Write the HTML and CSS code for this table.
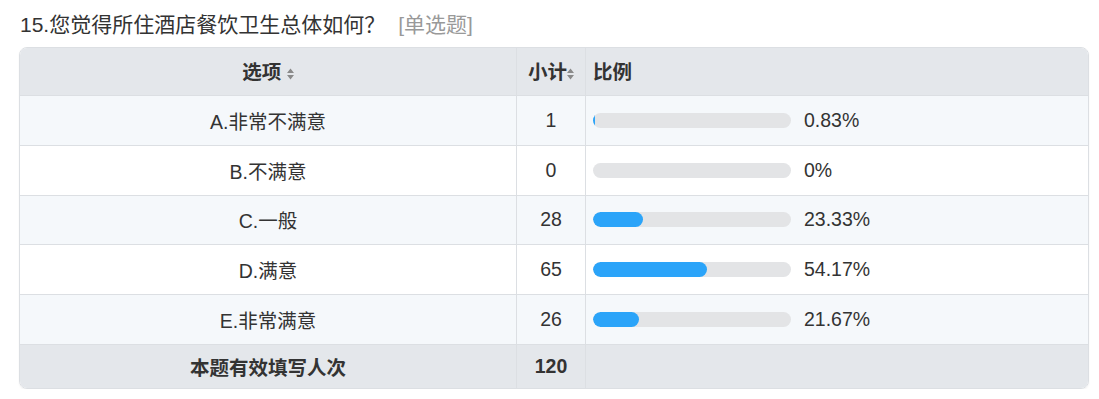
FILE: index.html
```html
<!DOCTYPE html>
<html lang="zh-CN">
<head>
<meta charset="utf-8">
<title>统计</title>
<link rel="stylesheet" href="styles.css">
</head>
<body>
<div class="page">
  <div class="title">15.您觉得所住酒店餐饮卫生总体如何？<span class="qtype">[单选题]</span></div>
  <table class="stats">
    <thead>
      <tr>
        <th class="c-opt">选项 <svg class="sort" width="7" height="12" viewBox="0 0 7 12"><path d="M0 5 L3.5 0.5 L7 5 Z M0 7 L7 7 L3.5 11.5 Z"/></svg></th>
        <th class="c-cnt">小计<svg class="sort" width="7" height="12" viewBox="0 0 7 12"><path d="M0 5 L3.5 0.5 L7 5 Z M0 7 L7 7 L3.5 11.5 Z"/></svg></th>
        <th class="c-pct">比例</th>
      </tr>
    </thead>
    <tbody>
      <tr class="alt">
        <td class="c-opt">A.非常不满意</td>
        <td class="c-cnt">1</td>
        <td class="c-pct"><div class="bar-wrap"><div class="track"><div class="fill" style="width:2px"></div></div><span class="pct">0.83%</span></div></td>
      </tr>
      <tr>
        <td class="c-opt">B.不满意</td>
        <td class="c-cnt">0</td>
        <td class="c-pct"><div class="bar-wrap"><div class="track"></div><span class="pct">0%</span></div></td>
      </tr>
      <tr class="alt">
        <td class="c-opt">C.一般</td>
        <td class="c-cnt">28</td>
        <td class="c-pct"><div class="bar-wrap"><div class="track"><div class="fill" style="width:50px"></div></div><span class="pct">23.33%</span></div></td>
      </tr>
      <tr>
        <td class="c-opt">D.满意</td>
        <td class="c-cnt">65</td>
        <td class="c-pct"><div class="bar-wrap"><div class="track"><div class="fill" style="width:114px"></div></div><span class="pct">54.17%</span></div></td>
      </tr>
      <tr class="alt">
        <td class="c-opt">E.非常满意</td>
        <td class="c-cnt">26</td>
        <td class="c-pct"><div class="bar-wrap"><div class="track"><div class="fill" style="width:46px"></div></div><span class="pct">21.67%</span></div></td>
      </tr>
    </tbody>
    <tfoot>
      <tr>
        <td class="c-opt">本题有效填写人次</td>
        <td class="c-cnt">120</td>
        <td class="c-pct"></td>
      </tr>
    </tfoot>
  </table>
</div>
</body>
</html>
```

FILE: styles.css
```css
html, body {
  margin: 0;
  padding: 0;
  background: #ffffff;
}

body {
  font-family: "Liberation Sans", "Noto Sans CJK SC", sans-serif;
  color: #333333;
}

.page {
  padding: 9px 10px 0 19px;
}

.title {
  font-size: 21px;
  line-height: 32px;
  height: 32px;
  color: #333333;
  padding-left: 1px;
  margin-bottom: 6px;
  white-space: nowrap;
}

.qtype {
  color: #999999;
  margin-left: 13px;
}

.stats {
  width: 1070px;
  border-collapse: separate;
  border-spacing: 0;
  border: 1px solid #dcdfe3;
  border-radius: 8px;
  box-shadow: 0 1px 2px rgba(0, 0, 0, 0.06);
  overflow: hidden;
  font-size: 19.5px;
  table-layout: fixed;
}

.stats th,
.stats td {
  padding: 0;
  vertical-align: middle;
}

.stats th + th,
.stats td + td {
  border-left: 1px solid #dcdfe3;
}

.stats tbody td,
.stats tfoot td {
  border-top: 1px solid #dcdfe3;
}

.stats thead th {
  height: 47px;
  background: #e4e7eb;
  font-weight: bold;
  color: #333333;
  padding-bottom: 2px;
  box-sizing: border-box;
}

.stats tbody td {
  height: 48.8px;
  background: #ffffff;
}

.stats tbody tr.alt td {
  background: #f5f8fb;
}

.stats tfoot td {
  height: 43.5px;
  background: #e4e7eb;
  font-weight: bold;
}

.c-opt {
  width: 496px;
  text-align: center;
}

.c-cnt {
  width: 69px;
  text-align: center;
}

.stats th.c-pct,
.stats td.c-pct {
  text-align: left;
  padding-left: 7px;
}

.sort {
  fill: #8a8a8a;
  vertical-align: -1px;
}

.bar-wrap {
  display: flex;
  align-items: center;
}

.track {
  width: 198px;
  height: 15px;
  border-radius: 8px;
  background: #e3e4e6;
  overflow: hidden;
  flex: none;
}

.fill {
  height: 15px;
  border-radius: 8px;
  background: #2ba4f9;
}

.pct {
  margin-left: 13px;
  color: #333333;
}
```
